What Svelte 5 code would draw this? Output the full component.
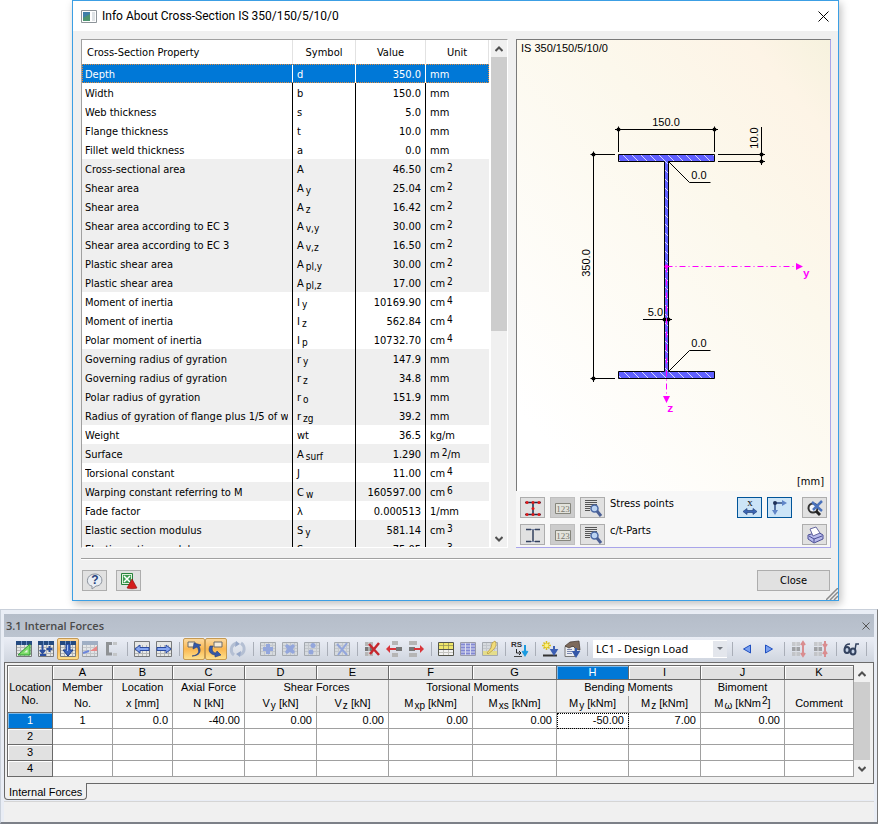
<script>
  const properties = [
    ['Depth', 'd', '350.0', 'mm'],
    ['Width', 'b', '150.0', 'mm'],
    ['Web thickness', 's', '5.0', 'mm'],
    ['Flange thickness', 't', '10.0', 'mm'],
    ['Fillet weld thickness', 'a', '0.0', 'mm'],
    ['Cross-sectional area', 'A', '46.50', 'cm^2', 1],
    ['Shear area', 'A_y', '25.04', 'cm^2', 1],
    ['Shear area', 'A_z', '16.42', 'cm^2', 1],
    ['Shear area according to EC 3', 'A_v,y', '30.00', 'cm^2', 1],
    ['Shear area according to EC 3', 'A_v,z', '16.50', 'cm^2', 1],
    ['Plastic shear area', 'A_pl,y', '30.00', 'cm^2', 1],
    ['Plastic shear area', 'A_pl,z', '17.00', 'cm^2', 1],
    ['Moment of inertia', 'I_y', '10169.90', 'cm^4'],
    ['Moment of inertia', 'I_z', '562.84', 'cm^4'],
    ['Polar moment of inertia', 'I_p', '10732.70', 'cm^4'],
    ['Governing radius of gyration', 'r_y', '147.9', 'mm', 1],
    ['Governing radius of gyration', 'r_z', '34.8', 'mm', 1],
    ['Polar radius of gyration', 'r_o', '151.9', 'mm', 1],
    ['Radius of gyration of flange plus 1/5 of we', 'r_zg', '39.2', 'mm', 1],
    ['Weight', 'wt', '36.5', 'kg/m'],
    ['Surface', 'A_surf', '1.290', 'm^2/m', 1],
    ['Torsional constant', 'J', '11.00', 'cm^4'],
    ['Warping constant referring to M', 'C_w', '160597.00', 'cm^6', 1],
    ['Fade factor', 'λ', '0.000513', '1/mm'],
    ['Elastic section modulus', 'S_y', '581.14', 'cm^3', 1],
    ['Elastic section modulus', 'S_z', '75.05', 'cm^3', 1],
  ];

  const letters = ['A', 'B', 'C', 'D', 'E', 'F', 'G', 'H', 'I', 'J', 'K'];
  const groups = [
    ['Member', 1], ['Location', 1], ['Axial Force', 1], ['Shear Forces', 2],
    ['Torsional Moments', 2], ['Bending Moments', 2], ['Bimoment', 1], ['', 1],
  ];
  const units = [
    'No.', 'x [mm]', 'N [kN]', 'V_y [kN]', 'V_z [kN]', 'M_xp [kNm]',
    'M_xs [kNm]', 'M_y [kNm]', 'M_z [kNm]', 'M_ω [kNm^2]', 'Comment',
  ];
  const forces = [
    ['1', '0.0', '-40.00', '0.00', '0.00', '0.00', '0.00', '-50.00', '7.00', '0.00', ''],
    Array(11).fill(''),
    Array(11).fill(''),
    Array(11).fill(''),
  ];

  let loadCase = $state('LC1 - Design Load');
  let activeCol = $state(7);

  // "_x" is a subscript, "^x" a superscript
  const split = (text) => text.split(/([_^][^/\s\]]+)/).filter(Boolean);

  const sheet = '<path d="M.5 .5h15v15H.5z" fill="#e6e7e5" stroke="#77797b"/><path d="M1 6.500h14M1 9.500h14M1 12.500h14M4.500 4v11M8.500 4v11M12.500 4v11" stroke="#b4b6b6"/>';
  const head = '<path d="M0 0h16v4H0z" fill="#244a80"/><path d="M5.500 0v4M10.500 0v4" stroke="#6a8fc4"/>';
  const pale = '<path d="M.5 1.500h15v13H.5z" fill="#d6dade" stroke="#a4a9af"/><path d="M1 4.500h14M1 7.500h14M1 10.500h14M4.500 2v12M8.500 2v12M12.500 2v12" stroke="#c3c7cc"/>';
  const list = '<path d="M1 1h8v4H1zM1 11h8v4H1z" fill="#b5b5b5"/><path d="M1 6h8v4H1z" fill="#777"/><path d="M5 1v14" stroke="#ddd"/>';

  const icons = {
    edit: sheet + head + '<path d="M2 14L14 3v11z" fill="#7ddc6a" stroke="#2f9a35"/><path d="M8 11.500l3.500-3v3z" fill="#e6f6df"/>',
    insert: sheet + head + '<path d="M4.500 4v7M2 9l2.500 3L7 9M2 14h6M11.500 5v6M8.500 8h6" stroke="#2c4f9e" stroke-width="2" fill="none"/>',
    down: sheet + head + '<path d="M6 3h4v6h3l-5 6-5-6h3z" fill="#3d66c0" stroke="#1b3c86"/><path d="M7.500 4v6" stroke="#a9c4f5"/>',
    chart: '<g opacity=".6">' + sheet + '<path d="M0 0h16v4H0z" fill="#738aa8"/></g><path d="M1 12l6-2" stroke="#6c86dc" stroke-width="2"/><path d="M8 10l7-5v5z" fill="#e88888"/>',
    bracket: '<path d="M8 2.500H3.500V13H8" stroke="#8f9295" stroke-width="3" fill="none"/><path d="M9 1h4v3H9zM9 12h4v3H9z" fill="#c3c5c7"/>',
    left: sheet + '<path d="M1 8l5-4v2.500h9v3H6V12z" fill="#86a6f0" stroke="#2a4aa0"/>',
    right: sheet + '<path d="M15 8l-5-4v2.500H1v3h9V12z" fill="#86a6f0" stroke="#2a4aa0"/>',
    undo: '<path d="M2 1h7v5H2z" fill="#f4ead8" stroke="#6b6b6b"/><path d="M6 15c7-1 8-5 5-9l-4 2 1-6 7 2-2 1c3 6 0 10-7 10z" fill="#3558a8" stroke="#203c7c" stroke-width=".6"/>',
    redo: '<path d="M6 1h8v5H6z" fill="#f4ead8" stroke="#6b6b6b"/><path d="M2 5h3c-2 4 0 7 3 7l1-2 4 4-6 2v-2C1 13 0 9 2 5z" fill="#3558a8" stroke="#203c7c" stroke-width=".6"/>',
    cycle: '<path d="M7 2C0 4 0 11 4 14M9 14c7-2 6-9 2-12" stroke="#b4bfd3" stroke-width="3" fill="none"/><path d="M6 0l4 3-5 3zM10 16l-4-3 5-3z" fill="#96a7c8"/>',
    add: pale + '<path d="M6 3h4v3h3v4h-3v3H6v-3H3V6h3z" fill="#93a6dc"/>',
    star: pale + '<path d="M5 3l3 2 3-2 2 2-2 3 2 3-2 2-3-2-3 2-2-2 2-3-2-3z" fill="#93a6dc"/>',
    dots: pale + '<circle cx="9" cy="4.500" r="2.500" fill="#93a6dc"/><circle cx="7" cy="11" r="2.500" fill="#93a6dc"/>',
    cross: pale + '<path d="M3 3l10 11M13 2L4 14" stroke="#93a6dc" stroke-width="2"/>',
    delRow: list + '<path d="M5 3l10 11M15 2L6 13" stroke="#c6272d" stroke-width="2.500"/>',
    rowLeft: '<path d="M6 0h6v4H6zM6 12h6v4H6z" fill="#b5b5b5"/><path d="M10 6h6v4h-6z" fill="#777"/><path d="M0 8l4-4v3h6v2H4v3z" fill="#d8353a"/>',
    rowRight: '<path d="M1 0h8v4H1zM1 12h8v4H1z" fill="#b5b5b5"/><path d="M1 6h6v4H1z" fill="#777"/><path d="M16 8l-4-4v3H6v2h6v3z" fill="#d8353a"/>',
    yellow: '<path d="M.5 1.500h15v13H.5z" fill="#f2f2f2" stroke="#55564c"/><path d="M1 2h14v6H1z" fill="#efe66a"/><path d="M1 4.500h14M5.500 2v6M10.500 2v6" stroke="#8c8a55" stroke-width=".7"/><path d="M1 8.500h14" stroke="#55564c"/><path d="M1 11.500h14M5.500 9v5M10.500 9v5" stroke="#c4c4c0"/>',
    blue: '<path d="M.5 1.500h15v13H.5z" fill="#dcdeee" stroke="#9a9ba8"/><path d="M1 3.500h14M1 6.500h14M1 9.500h14M1 12.500h14" stroke="#8288d4" stroke-width="2"/><path d="M5.500 2v12M10.500 2v12" stroke="#dcdeee"/>',
    hand: pale + '<path d="M1 10h14v4H1z" fill="#e4dd8c"/><path d="M13 0c2 3 1 6-2 9l-5 4-1-1 4-5 1-5z" fill="#f2dc79" stroke="#b09439" stroke-width=".7"/>',
    rs: '<text x="-1" y="6" font-size="8" font-weight="700" fill="#333">RS</text><path d="M4.500 8v4H8M7 10l2 2-2 2" stroke="#222" fill="none"/><path d="M2 15.500h8" stroke="#444"/><path d="M13 4v9M10.500 10l2.500 4 2.500-4" stroke="#1b9be0" stroke-width="2" fill="none"/>',
    sun: '<path d="M4.500 0v9M0 4.500h9M1.500 1.500l6 6M7.500 1.500l-6 6" stroke="#d9bf1d" stroke-width="1.500"/><circle cx="4.500" cy="4.500" r="2" fill="#fff27a"/><path d="M1 14.500h14" stroke="#333" stroke-width="2"/><path d="M12 5v5M9.500 9l2.500 4 2.500-4z" stroke="#3d5fb4" stroke-width="2" fill="#3d5fb4"/>',
    props: '<path d="M1 5.500h10v10H1z" fill="#eceef2" stroke="#777"/><path d="M3 8.500h5M3 10.500h5M3 12.500h5" stroke="#7c88b0"/><path d="M1 5l5-4 9-1 1 9-4-1-3-3-4 2z" fill="#7d6a5c" stroke="#41352e" stroke-width=".7"/><path d="M12 7v4M9.500 11l2.500 4 2.500-4z" stroke="#3558a8" stroke-width="2" fill="#3558a8"/>',
    prev: '<path d="M11.500 4v8L4.500 8z" fill="#7aa0f0" stroke="#1f4fc0"/>',
    next: '<path d="M4.500 4v8l7-4z" fill="#7aa0f0" stroke="#1f4fc0"/>',
    rowsUp: '<g opacity=".6">' + list + '</g><path d="M12 1v14M10 4l2-3 2 3M10 12l2 3 2-3" stroke="#d98d90" stroke-width="2" fill="none"/>',
    rowsIn: '<g opacity=".6">' + list + '</g><path d="M12 0v16M10 3l2 3 2-3M10 13l2-3 2 3" stroke="#d98d90" stroke-width="2" fill="none"/>',
    glasses: '<ellipse cx="4" cy="9" rx="2.500" ry="3" fill="#c5d2e6" stroke="#33425f" stroke-width="2"/><ellipse cx="10" cy="10.500" rx="2.500" ry="3" fill="#c5d2e6" stroke="#33425f" stroke-width="2"/><path d="M2 7c0-4 3-4 5-4M12 9l1-6h3" stroke="#33425f" stroke-width="1.500" fill="none"/>',
    points: '<path d="M0 2.500h16M0 14.500h16M8 2v12" stroke="#1c2b4a" stroke-width="1.500"/><g fill="#e01818"><circle cx="2" cy="2.500" r="1.500"/><circle cx="8" cy="2.500" r="1.500"/><circle cx="14" cy="2.500" r="1.500"/><circle cx="8" cy="8.500" r="1.500"/><circle cx="2" cy="14.500" r="1.500"/><circle cx="8" cy="14.500" r="1.500"/><circle cx="14" cy="14.500" r="1.500"/></g>',
    parts: '<path d="M1 2.500h5M10 2.500h5M1 14.500h5M10 14.500h5M8 3v11" stroke="#33415f" stroke-width="1.500"/><path d="M6 2.500h4M6 14.500h4" stroke="#7a88a8"/>',
    numbers: '<path d="M.5 3.500h15v10H.5z" fill="#e3e3dc" stroke="#85857c"/><text x="8" y="12" font-size="9" font-family="Liberation Serif, serif" text-anchor="middle" fill="#77776e">123</text>',
    details: '<path d="M0 .5h12M0 2.500h12M0 4.500h12M0 6.500h6M0 8.500h5M0 10.500h5" stroke="#555"/><circle cx="9.500" cy="8.500" r="3.500" fill="#bcd4f2" stroke="#4a68a4" stroke-width="1.500"/><path d="M12 11l4 5" stroke="#4a5f94" stroke-width="3"/>',
    dims: '<text x="8" y="6" font-size="11" font-family="Liberation Serif, serif" text-anchor="middle" fill="#111">x</text><path d="M1 11.500l4-3v2h6v-2l4 3-4 3v-2H5v2z" fill="#3d66b4" stroke="#24437f" stroke-width=".7"/>',
    axes: '<path d="M3 3h9M3 3v10" stroke="#2e4d86" stroke-width="1.500"/><path d="M10 0l5 3-5 3zM0 10l3 5 3-5z" fill="#6085c8"/><circle cx="3" cy="3" r="2" fill="#1e3158"/>',
    zoomOff: '<circle cx="6" cy="8" r="4.500" fill="#f4f6fa" stroke="#333" stroke-width="2"/><path d="M9 11l4 4" stroke="#222" stroke-width="3"/><path d="M5 2l10 9M15 1L6 10" stroke="#4a72bc" stroke-width="2.500"/>',
    print: '<path d="M1 8l10-3 5 3v4l-9 4-6-4z" fill="#b8bbec" stroke="#4a4d94"/><path d="M3 2l6-2 4 6-7 3z" fill="#fff" stroke="#6668a0"/><path d="M2 9l5 3 8-3M7 12v3" stroke="#4a4d94" fill="none"/>',
    help: '<path d="M8 1c9 0 9 12 1 12l-4 3 0-3C-2 12-1 1 8 1z" fill="#e9edf3" stroke="#8b929c"/><text x="8" y="11" font-size="12" font-weight="700" text-anchor="middle" fill="#27437e">?</text>',
    excel: '<path d="M.5 .5h11v11H.5z" fill="#dff0dc" stroke="#27803b"/><path d="M2 2h8v8H2z" fill="#3e9c52"/><path d="M3 3l6 6M9 3L3 9" stroke="#fff" stroke-width="1.500"/><path d="M11 6l5 9c-3 1-7 1-10 0z" fill="#d41c1c" stroke="#8c0c0c" stroke-width=".6"/>',
  };

  const toolbar = [
    ['edit', 'insert', 'down', 'chart', 'bracket'],
    ['left', 'right'],
    ['undo', 'redo', 'cycle'],
    ['add', 'star', 'dots'],
    ['cross'],
    ['delRow', 'rowLeft', 'rowRight'],
    ['yellow', 'blue', 'hand'],
    ['rs'],
    ['sun', 'props'],
  ];
  const toolbarEnd = [['prev', 'next'], ['rowsUp', 'rowsIn'], ['glasses']];
  const pressed = ['down', 'undo', 'redo'];
</script>

{#snippet rich(text)}{#each split(text) as part}{#if part[0] === '_'}<sub>{part.slice(1)}</sub>{:else if part[0] === '^'}<sup>{part.slice(1)}</sup>{:else}{part}{/if}{/each}{/snippet}

{#snippet icon(name)}
  <svg class="icon" width="16" height="16" viewBox="0 0 16 16" aria-hidden="true">{@html icons[name]}</svg>
{/snippet}

{#snippet chevron(d)}
  <svg width="8" height="6" viewBox="0 0 8 6" aria-hidden="true"><path {d} fill="none" stroke="#505050" stroke-width="2" /></svg>
{/snippet}

{#snippet scrollbar()}
  <div class="scrollbar">
    <button class="arrow" aria-label="Scroll up">{@render chevron('M.5 5L4 1.500 7.500 5')}</button>
    <div class="track"><div class="thumb"></div></div>
    <button class="arrow" aria-label="Scroll down">{@render chevron('M.5 1L4 4.500 7.500 1')}</button>
  </div>
{/snippet}

{#snippet tick(x, y)}
  <path d="M{x - 3} {y}h6M{x} {y - 3}v6" />
  <circle cx={x} cy={y} r="2" stroke="none" fill="#000" />
{/snippet}

<section class="dialog" role="dialog" aria-label="Info About Cross-Section">
  <header class="dialog-title">
    <svg width="16" height="13" viewBox="0 0 16 13" aria-hidden="true">
      <path d="M.5 .5h15v12H.5z" fill="#fff" stroke="#8d9499" />
      <path d="M2 2h7v9H2z" fill="#3f7fa8" /><path d="M2 8l7-4v7H2z" fill="#4d9470" />
      <path d="M11 2h3v9h-3z" fill="#dfe3e6" />
    </svg>
    <h1>Info About Cross-Section IS 350/150/5/10/0</h1>
    <button class="close-x" aria-label="Close window">
      <svg width="11" height="11" viewBox="0 0 11 11"><path d="M.5 .5l10 10M10.500 .5l-10 10" stroke="#000" /></svg>
    </button>
  </header>

  <div class="dialog-body">
    <div class="panes">
      <div class="prop-pane">
        <div class="prop-clip">
          <table class="props">
            <colgroup><col /><col class="c-symbol" /><col class="c-value" /><col class="c-unit" /></colgroup>
            <thead>
              <tr><th class="first">Cross-Section Property</th><th>Symbol</th><th>Value</th><th>Unit</th></tr>
            </thead>
            <tbody>
              {#each properties as [name, symbol, value, unit, shaded], i}
                <tr class:shaded class:selected={i === 0}>
                  <td><div class="clip">{name}</div></td>
                  <td>{@render rich(symbol)}</td>
                  <td class="num">{value}</td>
                  <td>{@render rich(unit)}</td>
                </tr>
              {/each}
            </tbody>
          </table>
        </div>
        {@render scrollbar()}
      </div>

      <div class="view-pane">
        <div class="drawing">
          <svg viewBox="0 0 313 451" role="img" aria-label="Cross-section drawing">
            <defs>
              <pattern id="hatch" width="9" height="9" patternUnits="userSpaceOnUse">
                <path d="M0 0h9v9H0z" fill="#6060ff" />
                <path d="M-1 -1L10 10" stroke="#d4d4ff" />
              </pattern>
            </defs>
            <text x="4" y="12">IS 350/150/5/10/0</text>

            <g stroke="#000">
              <path d="M101.500 114.500h96v7h-46v210h46v7h-96v-7h46v-210h-46z" fill="url(#hatch)" />
            </g>

            <g fill="none" stroke="#000">
              <path d="M98 89.500h103M101.500 87v25M197.500 87v25" />
              <path d="M74 114.500h24M74 338.500h24M76.500 112v230" />
              <path d="M201 114.500h47M201 121.500h47M244.500 87v38" />
              <path d="M151.500 121.500l21 21h21M151.500 331.500l21-21h21" />
              <path d="M126 279.500h29" />
              {@render tick(101.5, 89.5)}
              {@render tick(197.5, 89.5)}
              {@render tick(76.5, 114.5)}
              {@render tick(76.5, 338.5)}
              {@render tick(244.5, 114.5)}
              {@render tick(244.5, 121.5)}
              {@render tick(147.5, 279.5)}
              {@render tick(151.5, 279.5)}
            </g>

            <g stroke="#f0f" fill="#f0f">
              <path d="M149.500 226.500h130M149.500 226.500v130" stroke-dasharray="6 3 1 3" />
              <circle cx="149.500" cy="226.500" r="2" stroke="none" />
              <path d="M279 223l7 3.500-7 3.500zM146 356l3.500 7 3.500-7z" stroke="none" />
            </g>
            <text class="axis" x="286" y="237">y</text>
            <text class="axis" x="150" y="372">z</text>

            <text x="149" y="86" text-anchor="middle">150.0</text>
            <text x="182" y="139" text-anchor="middle">0.0</text>
            <text x="182" y="307" text-anchor="middle">0.0</text>
            <text x="146" y="276" text-anchor="end">5.0</text>
            <text transform="translate(73 223) rotate(-90)" text-anchor="middle">350.0</text>
            <text transform="translate(241 98) rotate(-90)" text-anchor="middle">10.0</text>
            <text class="mm" x="307" y="445" text-anchor="end">[mm]</text>
          </svg>
        </div>
        <div class="view-tools">
          <div class="tool-row">
            <button class="tool" aria-label="Show stress points">{@render icon('points')}</button>
            <button class="tool off" aria-label="Number stress points">{@render icon('numbers')}</button>
            <button class="tool" aria-label="Stress point details">{@render icon('details')}</button>
            <span class="tool-label">Stress points</span>
            <button class="tool on" aria-label="Dimensions">{@render icon('dims')}</button>
            <button class="tool on" aria-label="Axes">{@render icon('axes')}</button>
            <button class="tool last" aria-label="Reset zoom">{@render icon('zoomOff')}</button>
          </div>
          <div class="tool-row">
            <button class="tool" aria-label="Show c/t-parts">{@render icon('parts')}</button>
            <button class="tool off" aria-label="Number c/t-parts">{@render icon('numbers')}</button>
            <button class="tool" aria-label="c/t-part details">{@render icon('details')}</button>
            <span class="tool-label">c/t-Parts</span>
            <button class="tool" aria-label="Print">{@render icon('print')}</button>
          </div>
        </div>
      </div>
    </div>

    <footer class="dialog-footer">
      <button class="tool" aria-label="Help">{@render icon('help')}</button>
      <button class="tool" aria-label="Export to Excel">{@render icon('excel')}</button>
      <button class="close-btn">Close</button>
    </footer>
  </div>
  <svg class="grip" width="12" height="12" viewBox="0 0 12 12" aria-hidden="true">
    <path d="M0 12L12 0M4 12l8-8M8 12l4-4" stroke="#8a8a8a" stroke-width="1.500" />
  </svg>
</section>

<section class="window">
  <header class="window-title">
    <h2>3.1 Internal Forces</h2>
    <button aria-label="Close table">
      <svg width="8" height="8" viewBox="0 0 8 8"><path d="M.5 .5l7 7M7.500 .5l-7 7" stroke="#555" /></svg>
    </button>
  </header>

  <div class="toolbar">
    {#each toolbar as group}
      {#each group as name}
        <button class="tb" class:pressed={pressed.includes(name)} aria-label={name}>{@render icon(name)}</button>
      {/each}
      <span class="sep"></span>
    {/each}
    <div class="combo">
      <select aria-label="Load case" bind:value={loadCase}>
        <option>LC1 - Design Load</option>
      </select>
      <svg width="14" height="16" viewBox="0 0 14 16" aria-hidden="true">
        <path d="M0 0h14v16H0z" fill="#e3e6ec" /><path d="M4 6h6l-3 3z" fill="#70757d" />
      </svg>
    </div>
    <span class="sep"></span>
    {#each toolbarEnd as group}
      {#each group as name}
        <button class="tb" aria-label={name}>{@render icon(name)}</button>
      {/each}
      <span class="sep"></span>
    {/each}
  </div>

  <div class="sheet">
    <table class="forces">
      <colgroup>
        <col class="w46" /><col class="w60" /><col class="w60" /><col class="w72" /><col class="w72" /><col class="w72" />
        <col class="w84" /><col class="w84" /><col class="w72" /><col class="w72" /><col class="w84" /><col />
      </colgroup>
      <thead>
        <tr class="letters">
          <th rowspan="3" class="corner">Location<br />No.</th>
          {#each letters as letter, i}
            <th class:active={i === activeCol}>{letter}</th>
          {/each}
        </tr>
        <tr class="groups">
          {#each groups as [label, span]}
            <th colspan={span}>{label}</th>
          {/each}
        </tr>
        <tr class="units">
          {#each units as unit}
            <th>{@render rich(unit)}</th>
          {/each}
        </tr>
      </thead>
      <tbody>
        {#each forces as row, r}
          <tr>
            <th class:active={r === 0}>{r + 1}</th>
            {#each row as cell, c}
              <td class:center={c === 0} class:focused={r === 0 && c === activeCol} onclick={() => (activeCol = c)}>{cell}</td>
            {/each}
          </tr>
        {/each}
      </tbody>
    </table>
    {@render scrollbar()}
  </div>

  <div class="tabs">
    <button class="tab">Internal Forces</button>
    <span class="tab-line"></span>
  </div>
  <div class="status"></div>
</section>

<style>
  :global(body) { background: #fff; }
  h1, h2 { margin: 0; font-weight: 400; }
  button { padding: 0; font: inherit; color: inherit; }
  svg { display: block; }
  table { border-spacing: 0; table-layout: fixed; }
  th { font-weight: 400; }
  sub, sup { font-size: 10px; line-height: 0; margin-left: 1px; position: relative; vertical-align: baseline; }
  sub { top: 2px; }
  sup { top: -3px; }
  .icon { overflow: visible; font-family: "Liberation Sans", Arial, sans-serif; }

  /* cross-section dialog */
  .dialog {
    position: relative;
    margin: 0 39px 0 72px;
    border: 1px solid #3c9fe4;
    background: #f0f0f0;
    box-shadow: 2px 3px 8px rgba(0, 0, 0, 0.25);
    font: 11px/19px "DejaVu Sans Condensed", Tahoma, sans-serif;
    color: #000;
  }
  .dialog-title {
    display: flex; align-items: center; gap: 5px;
    height: 30px; padding: 0 9px 0 8px;
    background: #fff;
  }
  .dialog-title h1 { flex: 1; font: 12px/18px Roboto, "Segoe UI", sans-serif; }
  .close-x { border: 0; background: none; }
  .dialog-body { padding: 8px 7px 9px 8px; }
  .panes {
    display: grid; grid-template-columns: minmax(0, 427fr) minmax(0, 315fr); gap: 8px;
  }
  .prop-pane {
    display: flex; gap: 2px;
    height: 509px; box-sizing: border-box;
    border: 1px solid #a0a0a0; border-right-color: #fff; border-bottom-color: #fff;
    background: #fff;
  }
  .prop-clip { flex: 1; min-width: 0; overflow: hidden; }
  .props { width: 100%; line-height: 17px; }
  .props sub, .props sup { margin-left: 2px; }
  .props sup { top: -2px; }
  .c-symbol { width: 63px; }
  .c-value { width: 70px; }
  .c-unit { width: 63px; }
  .props th {
    height: 24px; padding: 0; box-sizing: border-box;
    border-right: 1px solid #e2e2e2;
  }
  .props th.first { text-align: left; padding-left: 5px; }
  .props td {
    height: 19px; padding: 2px 4px 0; box-sizing: border-box;
    border-right: 1px solid #000;
    white-space: nowrap;
  }
  .props td:first-child { padding-left: 3px; }
  .props td:last-child { border-right: 0; }
  .shaded { background: #efefef; }
  .selected { background: #0078d7; color: #fff; outline: 1px dotted #e08a3c; outline-offset: -1px; }
  .props .selected td { border-right-color: #fff; }
  .num { text-align: right; }
  .clip { overflow: hidden; }

  .scrollbar { display: flex; flex-direction: column; width: 16px; background: #f0f0f0; }
  .arrow {
    display: flex; align-items: center; justify-content: center;
    height: 17px; border: 0; background: none;
  }
  .track { flex: 1; }
  .thumb { height: 58%; background: #cdcdcd; }

  .view-pane {
    display: flex; flex-direction: column;
    border: 1px solid #7a7a7a; border-width: 1px 1px 1px 0;
    border-right-color: #a9a5ea; border-bottom-color: #a9a5ea;
    background: #f7f7f7;
  }
  .drawing {
    border-left: 1px solid #7a7a7a;
    background: linear-gradient(50deg, #fff 10%, #fcf8ec 65%, #fdf4e6 88%, #f6f2de);
  }
  .drawing svg { width: 100%; height: auto; font-family: "Liberation Sans", Arial, sans-serif; }
  .drawing .axis { font: 700 11px "Liberation Mono", monospace; fill: #f0f; }
  .drawing .mm { font-family: "DejaVu Sans Condensed", Tahoma, sans-serif; }
  .view-tools { display: flex; flex-direction: column; gap: 6px; padding: 6px 3px 2px 4px; }
  .tool-row { display: flex; gap: 5px; }
  .tool-label { flex: 1; line-height: 13px; }
  .tool {
    display: flex; align-items: center; justify-content: center;
    width: 25px; height: 21px; box-sizing: border-box;
    border: 1px solid #adadad; background: #e1e1e1;
  }
  .tool.off { background: #ccc; border-color: #bfbfbf; }
  .tool.on { background: #cce4f7; border-color: #005499; }
  .tool.last { margin-left: 5px; }

  .dialog-footer {
    display: flex; gap: 9px;
    margin-top: 10px; padding: 11px 1px 0;
    border-top: 1px solid #a0a0a0; box-shadow: inset 0 1px #fff;
  }
  .close-btn {
    width: 73px; height: 21px; margin-left: auto;
    border: 1px solid #adadad; background: #e1e1e1;
    line-height: 17px;
  }
  .grip { position: absolute; right: 0; bottom: 0; }

  /* table window */
  .window {
    margin-top: 8px; padding: 4px 3px 0;
    border: 1px solid #c9d0da; border-right-color: #777; border-bottom: 2px solid #7c8088;
    background: #e9edf5;
    font: 11px/16px "Liberation Sans", Arial, sans-serif;
    color: #000;
  }
  .window-title {
    display: flex; align-items: center; justify-content: space-between;
    height: 23px; padding: 0 4px 0 2px;
    background: linear-gradient(#b5bdc9, #bcc4d0);
  }
  .window-title h2 { font: 600 11px/16px "Open Sans", "Segoe UI", sans-serif; color: #4a4a4a; }
  .window-title button { border: 0; background: none; }
  .toolbar {
    display: flex; align-items: center;
    height: 25px; padding: 0 0 2px 9px; box-sizing: border-box;
    background: linear-gradient(#ebeef6, #cfd5df);
  }
  .tb {
    display: flex; align-items: center; justify-content: center;
    width: 22px; height: 22px; box-sizing: border-box;
    border: 1px solid transparent; background: none;
  }
  .pressed {
    border-color: #c69a52; border-radius: 2px;
    background: linear-gradient(#fbd9a0, #fbb750 50%, #fde08d);
  }
  .sep { width: 1px; height: 14px; margin: 0 3px 0 4px; background: #a9aeb8; }
  .combo {
    display: flex; align-items: center;
    width: 134px; height: 18px; margin: 0 1px 0 2px;
    background: #fff;
  }
  .combo select {
    flex: 1; min-width: 0; padding: 0 3px;
    appearance: none; border: 0; background: none;
    font: 11px/18px "Noto Sans", "Segoe UI", sans-serif; color: #000;
  }
  .combo svg { pointer-events: none; }

  .sheet {
    display: flex;
    padding: 2px 3px 6px 2px;
    border: 1px solid #6b6b6b; border-width: 1px 1px 0;
    background: #f0f0f0;
  }
  .forces {
    flex: 1; min-width: 0;
    border: 1px solid #696969; border-width: 1px 0 0 1px;
    background: #fff;
  }
  .w46 { width: 45px; }
  .w60 { width: 60px; }
  .w72 { width: 72px; }
  .w84 { width: 84px; }
  .forces th, .forces td {
    height: 16px; padding: 0; box-sizing: border-box;
    border-right: 1px solid #a0a0a0; border-bottom: 1px solid #a0a0a0;
    line-height: 15px;
  }
  .forces th { background: #f0f0f0; text-align: center; white-space: nowrap; }
  .forces td { padding-right: 4px; text-align: right; }
  .forces .center { padding-right: 0; text-align: center; }
  .forces .letters th, .forces tbody th, .forces .corner {
    background: #e1e1e1;
    border-color: #696969;
    box-shadow: inset 1px 1px #fff;
  }
  .forces .letters th { height: 14px; line-height: 13px; }
  .forces .letters .corner { padding-bottom: 5px; vertical-align: bottom; }
  .forces .groups th { border-bottom: 0; padding-bottom: 2px; line-height: 14px; }
  .forces .units th { height: 17px; padding-bottom: 2px; line-height: 14px; }
  .forces .letters .active, .forces tbody .active { background: #0078d7; color: #fff; box-shadow: inset 1px 1px #7ab8ea; }
  .focused { outline: 1px dotted #000; outline-offset: -1px; }
  .sheet .thumb { height: 100%; }

  .tabs { display: flex; align-items: flex-start; background: #f0f0f0; }
  .tab {
    height: 17px; padding: 1px 4px 0;
    border: 1px solid #696969; border-top: 0; border-radius: 0 0 4px 4px;
    background: #f0f0f0;
  }
  .tab-line { flex: 1; border-top: 1px solid #696969; }
  .status { height: 20px; margin-top: 1px; border-top: 1px solid #d5d5d5; background: #f0f0f0; }
</style>
